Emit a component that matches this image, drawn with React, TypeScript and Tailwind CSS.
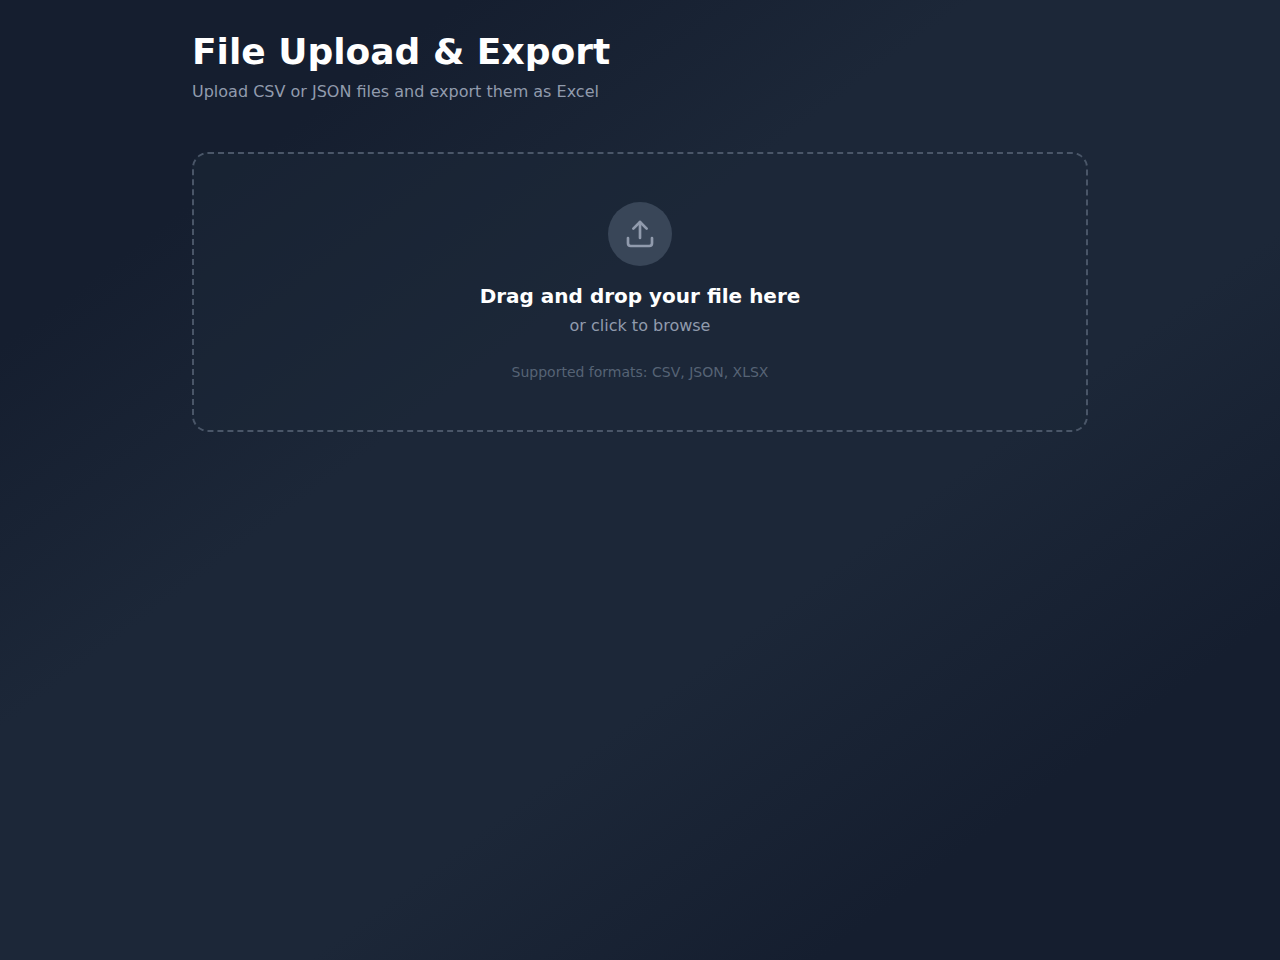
import { useState } from 'react';
import type { ChangeEvent, DragEvent } from 'react';
import clsx from 'clsx';
import { Upload } from 'lucide-react';

const ACCEPTED = '.csv,.json,.xlsx';

const DropZone = () => {
  const [dragging, setDragging] = useState(false);
  const [fileName, setFileName] = useState<string | null>(null);

  const handleDrop = (e: DragEvent<HTMLLabelElement>) => {
    e.preventDefault();
    setDragging(false);
    const file = e.dataTransfer.files[0];
    if (file) setFileName(file.name);
  };

  const handleChange = (e: ChangeEvent<HTMLInputElement>) => {
    const file = e.target.files?.[0];
    if (file) setFileName(file.name);
  };

  return (
    <label
      onDragOver={(e) => {
        e.preventDefault();
        setDragging(true);
      }}
      onDragLeave={() => setDragging(false)}
      onDrop={handleDrop}
      className={clsx(
        'relative flex cursor-pointer flex-col items-center rounded-2xl border-2 border-dashed p-12 text-center transition-colors',
        dragging ? 'border-blue-500 bg-blue-500/10' : 'border-[#4a5668] bg-[#1c2738]/50 hover:border-slate-500'
      )}
    >
      <input type="file" accept={ACCEPTED} onChange={handleChange} className="sr-only" />
      <span className="mb-4 flex h-16 w-16 items-center justify-center rounded-full bg-[#394658]">
        <Upload className="h-8 w-8 text-[#919bad]" />
      </span>
      <span className="mb-1 text-xl font-semibold text-white">
        {fileName ?? 'Drag and drop your file here'}
      </span>
      <span className="text-base text-[#919bad]">or click to browse</span>
      <span className="mt-6 text-sm text-[#566375]">Supported formats: CSV, JSON, XLSX</span>
    </label>
  );
};

const App = () => {
  return (
    <div className="min-h-screen bg-[linear-gradient(to_bottom_right,#151e2f_18%,#1c2738_38%,#1c2738_62%,#151e2f_82%)] font-['DejaVu_Sans',sans-serif]">
      <main className="mx-auto max-w-4xl py-8">
        <header className="mb-12">
          <h1 className="mb-2 text-4xl font-bold text-white">File Upload &amp; Export</h1>
          <p className="text-base text-[#919bad]">Upload CSV or JSON files and export them as Excel</p>
        </header>
        <DropZone />
      </main>
    </div>
  );
};

export default App;
